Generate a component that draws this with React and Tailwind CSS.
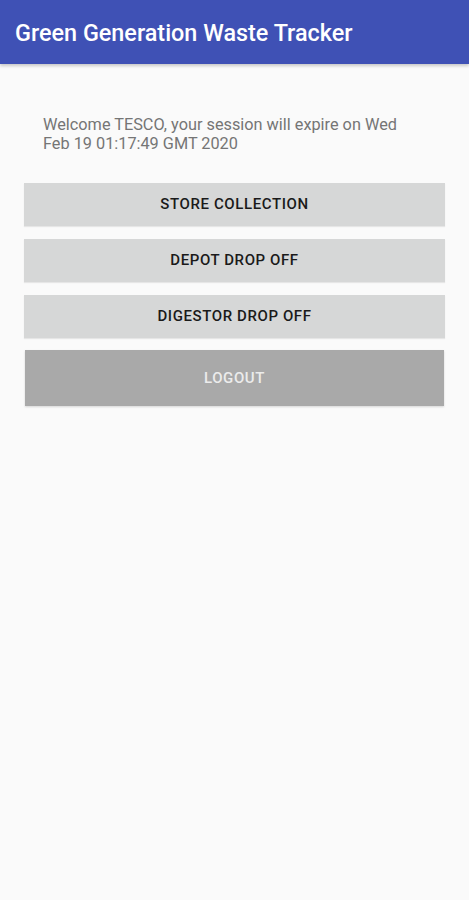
export default function App() {
  const btn = "w-full h-[43px] bg-[#d6d7d7] flex items-center justify-center text-[15px] font-medium tracking-[0.6px] text-[#1a1a1a] shadow-[0_1px_1px_rgba(0,0,0,0.08)]";
  return (
    <div className="min-h-[900px] bg-[#fafafa]" style={{ fontFamily: "Roboto, 'Noto Sans', sans-serif" }}>
      <div className="h-[64px] bg-[#3f51b5] flex items-center px-[15px] shadow-[0_2px_3px_rgba(0,0,0,0.2)]">
        <h1 className="text-white text-[23.4px] font-medium leading-none pt-[3px]">Green Generation Waste Tracker</h1>
      </div>
      <div className="px-[24px] pt-[51px]">
        <p className="pl-[19px] pr-[40px] text-[16.3px] leading-[19px] text-[#757575]">
          Welcome TESCO, your session will expire on Wed Feb 19 01:17:49 GMT 2020
        </p>
        <div className="mt-[30px] flex flex-col gap-[13px]">
          <button className={btn}>STORE COLLECTION</button>
          <button className={btn}>DEPOT DROP OFF</button>
          <button className={btn}>DIGESTOR DROP OFF</button>
        </div>
        <div className="px-[1px] mt-[12px]">
          <button className="w-full h-[56px] bg-[#a9a9a9] flex items-center justify-center text-[15px] font-medium tracking-[0.6px] text-[#ececec] shadow-[0_1px_2px_rgba(0,0,0,0.15)]">LOGOUT</button>
        </div>
      </div>
    </div>
  );
}
